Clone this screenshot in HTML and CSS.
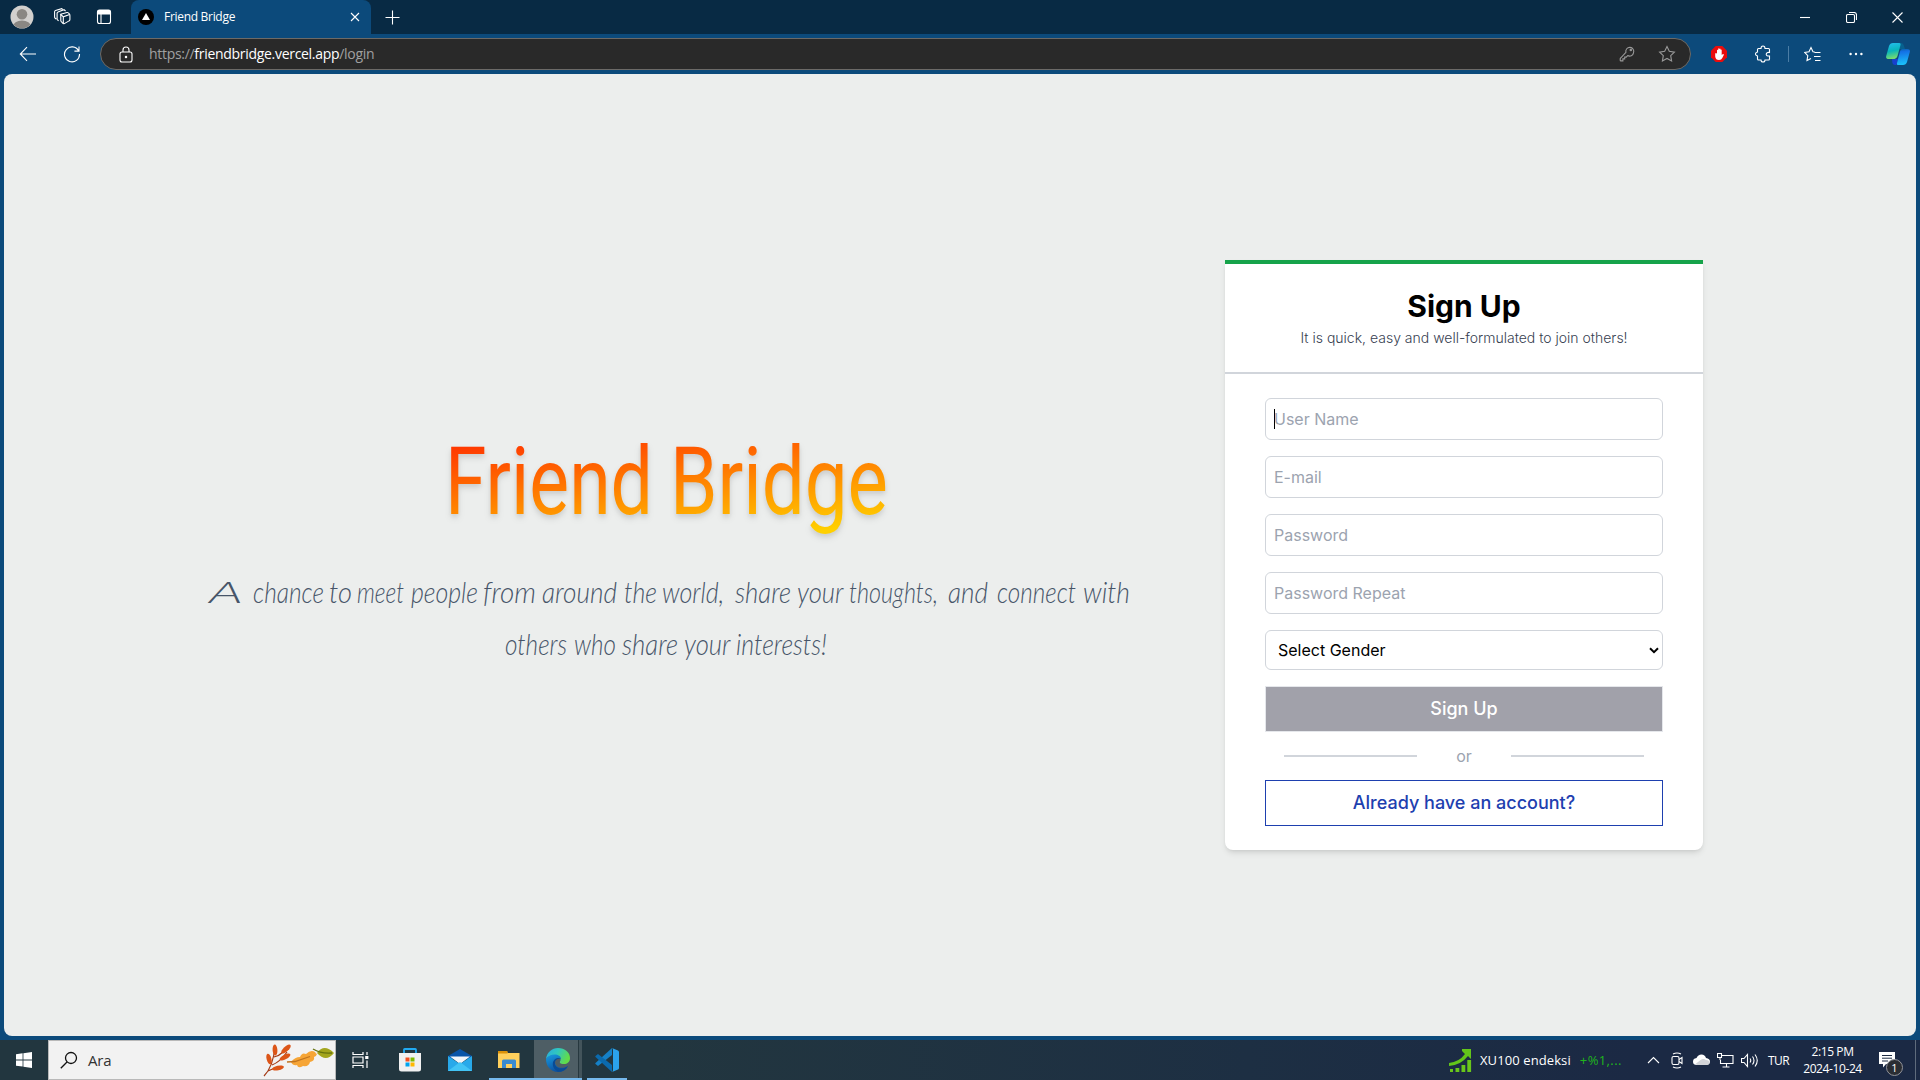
FILE: index.html
```html
<!DOCTYPE html>
<html lang="en">
<head>
<meta charset="utf-8">
<title>Friend Bridge</title>
<link rel="stylesheet" href="styles.css">
</head>
<body>
<div class="desktop">
  <header class="titlebar">
    <span class="slot w44"><svg width="24" height="24" viewBox="0 0 24 24"><defs><clipPath id="av"><circle cx="12" cy="12" r="11.3"/></clipPath></defs><circle cx="12" cy="12" r="11.5" fill="#d2d0ce"/><g clip-path="url(#av)" fill="#8a8783"><circle cx="12" cy="9.3" r="5.3"/><ellipse cx="12" cy="21.5" rx="9" ry="6"/></g></svg></span>
    <span class="slot w36"><svg width="18" height="18" viewBox="0 0 18 18" class="line"><path d="M7.6 6.300 14 4.500q1-.2 1.500.5l1 1.200q.4.500.4 1.200v4.200q0 1-.9 1.300l-4.600 2.700q-1.100.4-1.700-.4l-1.600-1.900q-.3-.4-.3-1V7.400q0-.8-.2-1.100z"/><path d="m7.800 6.500 2.500 2.300 6.300-2.200M10.300 9v6.600M5.600 12.800l-1.100-.9q-.5-.4-.4-1.100V5.200q0-1 .9-1.300l6-2.200 1.600 1.300M3.200 11l-1-.8q-.6-.5-.6-1.200V3.800q0-1 .9-1.300L8.700.6l1 .8"/></svg></span>
    <span class="slot w48"><svg width="16" height="16" viewBox="0 0 16 16" class="line"><rect x="1.500" y="1.500" width="13" height="13" rx="2"/><path d="M1.500 3q0-2 2-2h9q2 0 2 2v2h-13zM5 5v9.500" fill="#fff"/></svg></span>
    <div class="tab">
      <svg class="favicon" width="16" height="16" viewBox="0 0 16 16"><circle cx="8" cy="8" r="8" fill="#000"/><path d="m8 4 4 7H4z" fill="#fff"/></svg>
      <span class="tab-title">Friend Bridge</span>
      <svg width="10" height="10" viewBox="0 0 10 10" class="line"><path d="m1 1 8 8M9 1 1 9"/></svg>
    </div>
    <span class="slot w42"><svg width="16" height="16" viewBox="0 0 16 16" class="line"><path d="M8.500 1.500v14M1.500 8.500h14"/></svg></span>
    <div class="controls">
      <span class="slot"><svg width="10" height="10" viewBox="0 0 10 10" class="line"><path d="M0 5.500h10"/></svg></span>
      <span class="slot"><svg width="11" height="11" viewBox="0 0 11 11" class="line"><rect x=".5" y="2.500" width="8" height="8" rx="1.300"/><path d="M3 .5h5q2.500 0 2.500 2.500v5"/></svg></span>
      <span class="slot"><svg width="11" height="11" viewBox="0 0 11 11" class="line"><path d="m.5.5 10 10M10.500.5l-10 10"/></svg></span>
    </div>
  </header>

  <nav class="toolbar">
    <span class="slot w44 back"><svg width="18" height="16" viewBox="0 0 18 16" class="line"><path d="M17 8H1.500M8 1.200 1.300 8 8 14.800"/></svg></span>
    <span class="slot w44"><svg width="18" height="18" viewBox="0 0 18 18" class="line"><path d="M15.600 5.800A7.500 7.500 0 1 0 16.500 9M16 1.500v4.600h-4.600"/></svg></span>
    <div class="address">
      <svg width="14" height="17" viewBox="0 0 14 17" class="line"><rect x="1" y="6" width="12" height="10" rx="2"/><path d="M4 6V4q0-3 3-3t3 3v2"/><circle cx="7" cy="11" r=".7" fill="#fff"/></svg>
      <span class="url">https://<b>friendbridge.vercel.app</b>/login</span>
      <svg class="key" width="16" height="16" viewBox="0 0 16 16"><circle cx="11.800" cy="4" r=".7"/><path d="M14.500 6.800a4 4 0 1 0-7.600-.5L1.600 12q-.5.400-.4 1.200v1q0 .7.700.7h2v-2h1.800v-1.800h1.500l1.500-1.500a4 4 0 0 0 5.800-2.800z"/></svg>
      <svg class="star" width="18" height="18" viewBox="0 0 18 18"><path d="m9 1.600 2.300 4.700 5.100.8-3.700 3.600.9 5.200L9 13.400l-4.600 2.500.9-5.200L1.600 7.100l5.100-.8z"/></svg>
    </div>
    <span class="slot w56"><svg width="16" height="16" viewBox="0 0 16 16"><path d="M4.700 0h6.600L16 4.700v6.600L11.300 16H4.700L0 11.300V4.700z" fill="#eb0c0c"/><path d="M4.200 7.300v3.200Q4.600 14 8 14q2.500 0 3.300-1.900L12.800 9q.2-1-.8-.9l-1.300 1V4q-.5-1-1.100 0V3q-.6-1-1.200 0v-.3q-.6-1-1.200 0V4q-.8-.8-1.200.2v3.500q-1-1.300-1-.4z" fill="#fff"/></svg></span>
    <span class="slot w33"><svg width="17" height="18" viewBox="0 0 17 18" class="line"><path d="M6 3.500Q6 1 8 1t2 2.500h3.500q1 0 1 1v3q-3-.5-3.300 1.700.2 2.100 3.300 1.800v3q0 1-1 1H10Q10 17 8 17t-2-2H3.500q-1 0-1-1v-3Q.5 10.500.5 9t2-2V4.500q0-1 1-1z"/></svg></span>
    <span class="divider"></span>
    <span class="slot w46"><svg width="17" height="17" viewBox="0 0 17 17" class="line"><path d="m10.800 6-1.800-.3-2-4.200-2 4.200-4.300.7 3.100 3.200-.8 4.900L7 12.400M10.500 6.500h6M10 10.500h6.500M11 14.500h5.500"/></svg></span>
    <span class="slot w42"><svg width="14" height="4" viewBox="0 0 14 4" fill="#fff"><circle cx="1.600" cy="2" r="1.200"/><circle cx="7" cy="2" r="1.200"/><circle cx="12.400" cy="2" r="1.200"/></svg></span>
    <span class="slot w42"><svg width="24" height="24" viewBox="0 0 24 24"><defs><linearGradient id="ca" x2=".2" y2="1"><stop stop-color="#26bdf0"/><stop offset=".55" stop-color="#08b5ba"/><stop offset="1" stop-color="#73da72"/></linearGradient><linearGradient id="cb" x2=".1" y2="1"><stop stop-color="#095f9e"/><stop offset=".2" stop-color="#1470e5"/><stop offset="1" stop-color="#1bc1fa"/></linearGradient></defs><path d="M13 1h2q2 0 2.600 2L19 7h-6z" fill="#07608e"/><path d="M6 17h6l-1.500 6H9q-2 0-2.600-2z" fill="#1840ce"/><path d="M16 7h5q3.500 0 2.800 3L21 20q-1 3-4 3h-5q-1.500 0-1-2l3-11.500Q14.500 7 16 7z" fill="url(#cb)"/><path d="M7 1h6q2 0 1.500 2L11.500 14q-1 3-3 3H3q-3.500 0-2.800-3L3 4q1-3 4-3z" fill="url(#ca)"/></svg></span>
  </nav>

  <main class="page">
    <section class="hero">
      <svg class="brand" width="460" height="104" viewBox="0 0 460 104">
        <defs><linearGradient id="fire" gradientUnits="userSpaceOnUse" x1="8" y1="-32" x2="28" y2="139"><stop stop-color="#ff0000"/><stop offset="1" stop-color="#ffd000"/></linearGradient></defs>
        <g fill="url(#fire)"><text x="2" y="81" textLength="208" lengthAdjust="spacingAndGlyphs">Friend</text> <text x="227" y="81" textLength="218" lengthAdjust="spacingAndGlyphs">Bridge</text></g>
      </svg>
      <svg class="slogan" width="940" height="120" viewBox="0 0 940 120">
        <text y="43"><tspan x="12" textLength="32" lengthAdjust="spacingAndGlyphs">A</tspan> <tspan x="56" textLength="71" lengthAdjust="spacingAndGlyphs">chance</tspan> <tspan x="132" textLength="23" lengthAdjust="spacingAndGlyphs">to</tspan> <tspan x="160" textLength="47" lengthAdjust="spacingAndGlyphs">meet</tspan> <tspan x="214" textLength="67" lengthAdjust="spacingAndGlyphs">people</tspan> <tspan x="286" textLength="53" lengthAdjust="spacingAndGlyphs">from</tspan> <tspan x="345" textLength="75" lengthAdjust="spacingAndGlyphs">around</tspan> <tspan x="427" textLength="33" lengthAdjust="spacingAndGlyphs">the</tspan> <tspan x="465" textLength="62" lengthAdjust="spacingAndGlyphs">world,</tspan> <tspan x="538" textLength="56" lengthAdjust="spacingAndGlyphs">share</tspan> <tspan x="600" textLength="46" lengthAdjust="spacingAndGlyphs">your</tspan> <tspan x="652" textLength="89" lengthAdjust="spacingAndGlyphs">thoughts,</tspan> <tspan x="751" textLength="40" lengthAdjust="spacingAndGlyphs">and</tspan> <tspan x="800" textLength="79" lengthAdjust="spacingAndGlyphs">connect</tspan> <tspan x="886" textLength="47" lengthAdjust="spacingAndGlyphs">with</tspan></text>
        <text y="95"><tspan x="308" textLength="62" lengthAdjust="spacingAndGlyphs">others</tspan> <tspan x="377" textLength="42" lengthAdjust="spacingAndGlyphs">who</tspan> <tspan x="425" textLength="56" lengthAdjust="spacingAndGlyphs">share</tspan> <tspan x="487" textLength="46" lengthAdjust="spacingAndGlyphs">your</tspan> <tspan x="539" textLength="91" lengthAdjust="spacingAndGlyphs">interests!</tspan></text>
      </svg>
    </section>

    <section class="card">
      <div class="card-head">
        <h1>Sign Up</h1>
        <p>It is quick, easy and well-formulated to join others!</p>
      </div>
      <form class="form">
        <div class="field"><span class="caret"></span>User Name</div>
        <div class="field">E-mail</div>
        <div class="field">Password</div>
        <div class="field">Password Repeat</div>
        <div class="select">Select Gender<svg width="10" height="7" viewBox="0 0 10 7"><path d="m1 1.300 4 3.900 4-3.900" fill="none" stroke="#000" stroke-width="2"/></svg></div>
        <button type="button" class="submit">Sign Up</button>
        <div class="or"><i></i><span>or</span><i></i></div>
        <button type="button" class="login">Already have an account?</button>
      </form>
    </section>
  </main>

  <footer class="taskbar">
    <span class="slot w48"><svg width="16" height="16" viewBox="0 0 16 16" fill="#fff"><path d="M0 2.300 6.600 1.300v6.200H0zM7.400 1.200 16 0v7.500H7.400zM0 8.400h6.600v6.200L0 13.700zM7.400 8.400H16V16l-8.600-1.200z"/></svg></span>
    <div class="search">
      <svg width="18" height="18" viewBox="0 0 18 18"><circle cx="11" cy="7" r="5.500"/><path d="m7 11-6.200 6.200"/></svg>
      <span>Ara</span>
      <svg class="leaves" width="72" height="34" viewBox="0 0 72 34">
        <path d="M1 33Q10 24 12 4M5 28q8-4 15-4M9 22q8-3 15-13M11 14q5-1 9-5" fill="none" stroke="#a43b16" stroke-width="1.200"/>
        <g fill="#dc5518"><ellipse cx="12" cy="7" rx="2.400" ry="5.500" transform="rotate(-4 12 7)"/><ellipse cx="23" cy="6" rx="2.500" ry="6" transform="rotate(48 23 6)"/><ellipse cx="22" cy="14" rx="2.400" ry="6" transform="rotate(62 22 14)"/><ellipse cx="6" cy="16" rx="2.400" ry="5.500" transform="rotate(-15 6 16)"/><ellipse cx="15" cy="25" rx="2.300" ry="6" transform="rotate(78 15 25)"/></g>
        <path d="M28 19q4-5 9-5 2-5 6-3 5-5 9-2 1 2 2 2-1 3-3 3 1 4-4 5-1 5-7 4-5 3-6-1-4 1-6-3z" fill="#f6a536"/><path d="m24 19 8-.5 15-5" fill="none" stroke="#c07420"/>
        <path d="M54 10q7-10 17 0-8 10-17 0z" fill="#a3a51d"/><path d="M50 6q8 5 19 4" fill="none" stroke="#66720e"/>
      </svg>
    </div>
    <span class="slot w49"><svg width="17" height="16" viewBox="0 0 17 16" fill="none" stroke="#fff" stroke-width="1.200"><path d="M1 0v2.500h10V0M1 16v-2.500h10V16M1 5h10v6H1zM15 0v3M15 8.500V16"/><path d="M13.200 4h3.200v3h-3.200z" fill="#fff" stroke="none"/></svg></span>
    <span class="slot w50"><svg width="24" height="24" viewBox="0 0 24 24"><path d="M6 7V1.800q0-.8.800-.8h10.400q.8 0 .8.800V7" fill="none" stroke="#22aaf2" stroke-width="1.800"/><path d="M1 5h22v16q0 2.500-2.500 2.500h-17Q1 23.500 1 21z" fill="#f1f1f1"/><path d="M7.500 9.500h4v4h-4z" fill="#f25022"/><path d="M12.500 9.500h4v4h-4z" fill="#7fba00"/><path d="M7.500 14.500h4v4h-4z" fill="#00a4ef"/><path d="M12.500 14.500h4v4h-4z" fill="#ffb900"/></svg></span>
    <span class="slot w50"><svg width="24" height="24" viewBox="0 0 24 24"><path d="M0 8 12 1l12 7v3H0z" fill="#0a55a8"/><path d="M2 8.500h20L12 16z" fill="#f3f6fa"/><path d="M0 8v15h24V8L12 16z" fill="#28a9ea"/><path d="M0 23 12 14l12 9z" fill="#42c4f5"/></svg></span>
    <span class="slot files"><svg width="22" height="20" viewBox="0 0 22 20"><path d="M0 1h8l2 2h11.500v15H0z" fill="#ffd05c"/><path d="M0 1h9.500v2.500H0z" fill="#dc9208"/><path d="M4 18v-7q0-1.500 1.500-1.500h11Q18 9.500 18 11v7h-4v-4H8v4z" fill="#398bd0"/></svg></span>
    <span class="slot active"><svg width="24" height="24" viewBox="0 0 24 24"><defs><linearGradient id="ea" x2="1" y2=".4"><stop stop-color="#28a9e5"/><stop offset=".5" stop-color="#31c7bd"/><stop offset="1" stop-color="#61dc49"/></linearGradient><linearGradient id="eb" x2=".5" y2="1"><stop stop-color="#189be0"/><stop offset="1" stop-color="#0b4e9d"/></linearGradient></defs><path d="M0 11C1 4 6 0 12 0c7 0 12 4.500 12 10 0 4-3 6-6 6-4 0-5-1.500-3.500-3.500C16 8 6 4 0 11z" fill="url(#ea)"/><path d="M0 11c3-6 15-6 15 0-3-2-6 0-6 3.500C9 19 15 22 22 18 20 22 16.500 24 12 24 5 24 0 18.500 0 11z" fill="url(#eb)"/><path d="M9 14c-1 6 7 9 13 4-3 5-7 6-10 5.500C6 21 5 13 10 10.500q3-1 5 .5c-3-1-5.500.5-6 3z" fill="#094b95"/></svg></span>
    <span class="slot code"><svg width="24" height="24" viewBox="0 0 24 24"><path d="M17 0v7L3 18l-2.500-2Q0 15.500.5 15z" fill="#1580c6"/><path d="M17 24v-7L3 6 .5 8q-.5.500 0 1z" fill="#0b6aad"/><path d="m17 0 6 2.500q1 .5 1 1.500v16q0 1-1 1.500L17 24q1-.5 1-2V2q0-1.500-1-2z" fill="#2ba2ec"/></svg></span>
    <div class="tray">
      <div class="stock"><svg width="23" height="23" viewBox="0 0 23 23"><path d="M0 14q10-1 16-9l-3-3V0h9v10l-3-3Q12 16 0 17z" fill="#63c51a"/><path d="M1 20h3v3H1zM6.500 19h3.800v4H6.500zM12.500 16h3.800v7h-3.800zM18.300 11h3.800v12h-3.800z" fill="#69c61b"/></svg><span>XU100 endeksi</span><em>+%1,...</em></div>
      <span class="slot w24"><svg width="13" height="8" viewBox="0 0 13 8" class="line"><path d="m1 7 5.500-5.500L12 7"/></svg></span>
      <span class="slot w24"><svg width="12" height="17" viewBox="0 0 12 17" class="line"><rect x="1" y="4.500" width="7" height="8" rx="1.500"/><path d="m8 7.500 3-2v6l-3-2M2 2q4-2 8 0M2 15q4 2 8 0"/></svg></span>
      <span class="slot w24"><svg width="17" height="12" viewBox="0 0 17 12"><path d="M4 11q-4 0-4-3.300T3.500 4Q5 .5 8.500.5 12 .5 13 4q4 .5 4 3.500T13.500 11z" fill="#fff"/><path d="m2.500 10 5-4q3-2 5.500 0 4 .5 3.900 2.500Q16 11 13.500 11H4z" fill="#d2d4d8"/></svg></span>
      <span class="slot w24"><svg width="17" height="15" viewBox="0 0 17 15" class="line"><path d="M5 2.500h11v8H3.500V7M9.500 10.500v3.500M5.500 14h7M.5.500h4v4h-4zM3 4.500V7"/></svg></span>
      <span class="slot w24"><svg width="17" height="15" viewBox="0 0 17 15" class="line"><path d="M.5 5.500H3l3.500-4v12l-3.500-4H.5zM9 5.500q1.500 2 0 4M11.500 3.500q3 4 0 8M14 1.500q4.500 6 0 12"/></svg></span>
      <span class="lang">TUR</span>
      <div class="clock"><span>2:15 PM</span><span>2024-10-24</span></div>
      <div class="notify"><svg width="16" height="16" viewBox="0 0 16 16"><path d="M0 0h16v12H7l-3 3.500V12H0z" fill="#fff"/><path d="M3 3.500h10M3 6.200h10M3 9h6" stroke="#1c2a42"/></svg><span class="badge">1</span></div>
    </div>
  </footer>
</div>
</body>
</html>
```
FILE: styles.css
```css
* { box-sizing: border-box; }
body { margin: 0; font-family: "Open Sans", "Noto Sans", sans-serif; }
svg { display: block; flex: none; }
.desktop { width: 1920px; height: 1080px; overflow: hidden; display: flex; flex-direction: column; background: #0c4a7b; }
.line { fill: none; stroke: #fff; stroke-width: 1.1; }
.slot { flex: none; display: flex; align-items: center; justify-content: center; height: 100%; }
.w24 { width: 24px; }
.w33 { width: 33px; }
.w36 { width: 36px; }
.w42 { width: 42px; }
.w44 { width: 44px; }
.w46 { width: 46px; }
.w48 { width: 48px; }
.w49 { width: 49px; }
.w50 { width: 50px; }
.w56 { width: 56px; }

.titlebar { height: 34px; flex: none; display: flex; background: #082a44; }
.tab { width: 240px; margin-left: 3px; padding: 0 11px 0 7px; background: #0c4a7b; border-radius: 8px 8px 0 0; display: flex; align-items: center; color: #fff; font-size: 12px; }
.tab-title { flex: 1; margin-left: 10px; padding-bottom: 1px; letter-spacing: -0.3px; }
.controls { margin-left: auto; display: grid; grid-template-columns: repeat(3, 46px); }

.toolbar { height: 40px; flex: none; display: flex; align-items: center; }
.back { margin-left: 6px; }
.address { width: 1591px; height: 32px; margin-left: 6px; padding: 0 14px 0 18px; border: 1px solid #6c6a67; border-radius: 16px; background: #292929; display: flex; align-items: center; }
.url { flex: 1; margin-left: 16px; padding-bottom: 1px; font-size: 14px; letter-spacing: -0.3px; color: #a0a0a0; }
.url b { font-weight: 400; color: #fff; }
.key, .star { fill: none; stroke: #999; stroke-width: 1.1; }
.star { margin-left: 23px; }
.divider { width: 1px; height: 16px; margin-left: 8px; background: #4b7da5; }

.page { height: 962px; flex: none; margin: 0 4px 4px; background: #eceeed; border-radius: 8px; display: flex; align-items: flex-start; }
.hero { width: 1221px; padding: 359px 0 0 193px; }
.brand { margin-left: 246px; overflow: visible; font: 400 94.500px Roboto, sans-serif; filter: drop-shadow(0 4px 3px rgba(0,0,0,.1)) drop-shadow(0 2px 2px rgba(0,0,0,.06)); }
.slogan { margin-top: 23px; font: italic 300 29px Lato, sans-serif; fill: #475569; }

.card { width: 478px; height: 590px; margin-top: 186px; background: #fff; border-top: 4px solid #16a34a; border-radius: 0 0 8px 8px; box-shadow: 0 4px 6px -1px rgba(0,0,0,.1), 0 2px 4px -2px rgba(0,0,0,.1); font-family: Inter, sans-serif; }
.card-head { height: 110px; padding-top: 24px; border-bottom: 2px solid #d1d5db; text-align: center; }
.card-head h1 { margin: 0 0 4px; font-size: 30px; line-height: 36px; font-weight: 700; }
.card-head p { margin: 0; font-size: 14px; line-height: 20px; font-weight: 300; color: #374151; }
.form { padding: 24px 40px; display: flex; flex-direction: column; }
.field, .select { height: 42px; margin-bottom: 16px; padding: 0 8px; border: 1px solid #d1d5db; border-radius: 6px; display: flex; align-items: center; font-size: 16px; color: #9ca3af; }
.caret { width: 1px; height: 20px; margin-right: -1px; background: #000; }
.select { height: 40px; padding: 0 3px 0 12px; justify-content: space-between; color: #000; }
.submit, .login { height: 46px; padding: 0 0 2px; border: 1px solid #e5e7eb; background: #a1a1aa; color: #fff; font: 500 18px Inter, sans-serif; }
.login { border-color: #1e40af; background: #fff; color: #1e40af; }
.or { height: 48px; display: flex; padding: 0 19px; align-items: center; justify-content: space-between; color: #9ca3af; font-size: 16px; }
.or i { width: 133px; height: 2px; background: #d1d5db; }

.taskbar { height: 40px; flex: none; display: flex; color: #fff; font-size: 13px; background: linear-gradient(90deg, #22363f 0, #22363f 34%, #1d2f43 65%, #1b2944 85%); }
.search { width: 288px; padding: 0 0 0 11px; border: 1px solid #b9b9b9; background: #f2f2f2; display: flex; align-items: center; color: #333; font-size: 15px; }
.search svg { fill: none; stroke: #111; stroke-width: 1.3; }
.search span { margin-left: 10px; flex: 1; letter-spacing: -0.2px; }
.search .leaves { stroke: none; }
.files { width: 45px; margin-left: 4px; padding-right: 5px; box-shadow: inset 0 -2px #76b9ed; }
.active { width: 48px; background: linear-gradient(90deg, #4e5e65 44px, #27383f 44px, #27383f 45px, #43545b 45px); box-shadow: inset 0 -2px #76b9ed; }
.files + .active { margin-left: 0; padding-right: 1px; }
.code { width: 40px; margin-left: 5px; box-shadow: inset 0 -2px #76b9ed; }
.tray { margin-left: auto; display: flex; align-items: center; }
.stock { width: 192px; display: flex; align-items: center; letter-spacing: 0.1px; }
.stock span { margin: 0 9px 0 8px; white-space: nowrap; }
.stock em { font-style: normal; letter-spacing: 0.4px; color: #20b51c; }
.lang { width: 36px; padding-left: 7px; font-size: 12px; letter-spacing: -0.6px; }
.clock { width: 71px; display: flex; flex-direction: column; align-items: center; padding-bottom: 1px; font-size: 12px; line-height: 17px; letter-spacing: -0.4px; }
.notify { width: 37px; height: 40px; margin: 0 4px 0 11px; padding-top: 12px; position: relative; border-right: 1px solid #5f6b7c; }
.badge { position: absolute; left: 7px; top: 19px; width: 17px; height: 17px; border: 1px solid #92949a; border-radius: 50%; background: #2a2d33; font-size: 11px; line-height: 15px; text-align: center; }
```
